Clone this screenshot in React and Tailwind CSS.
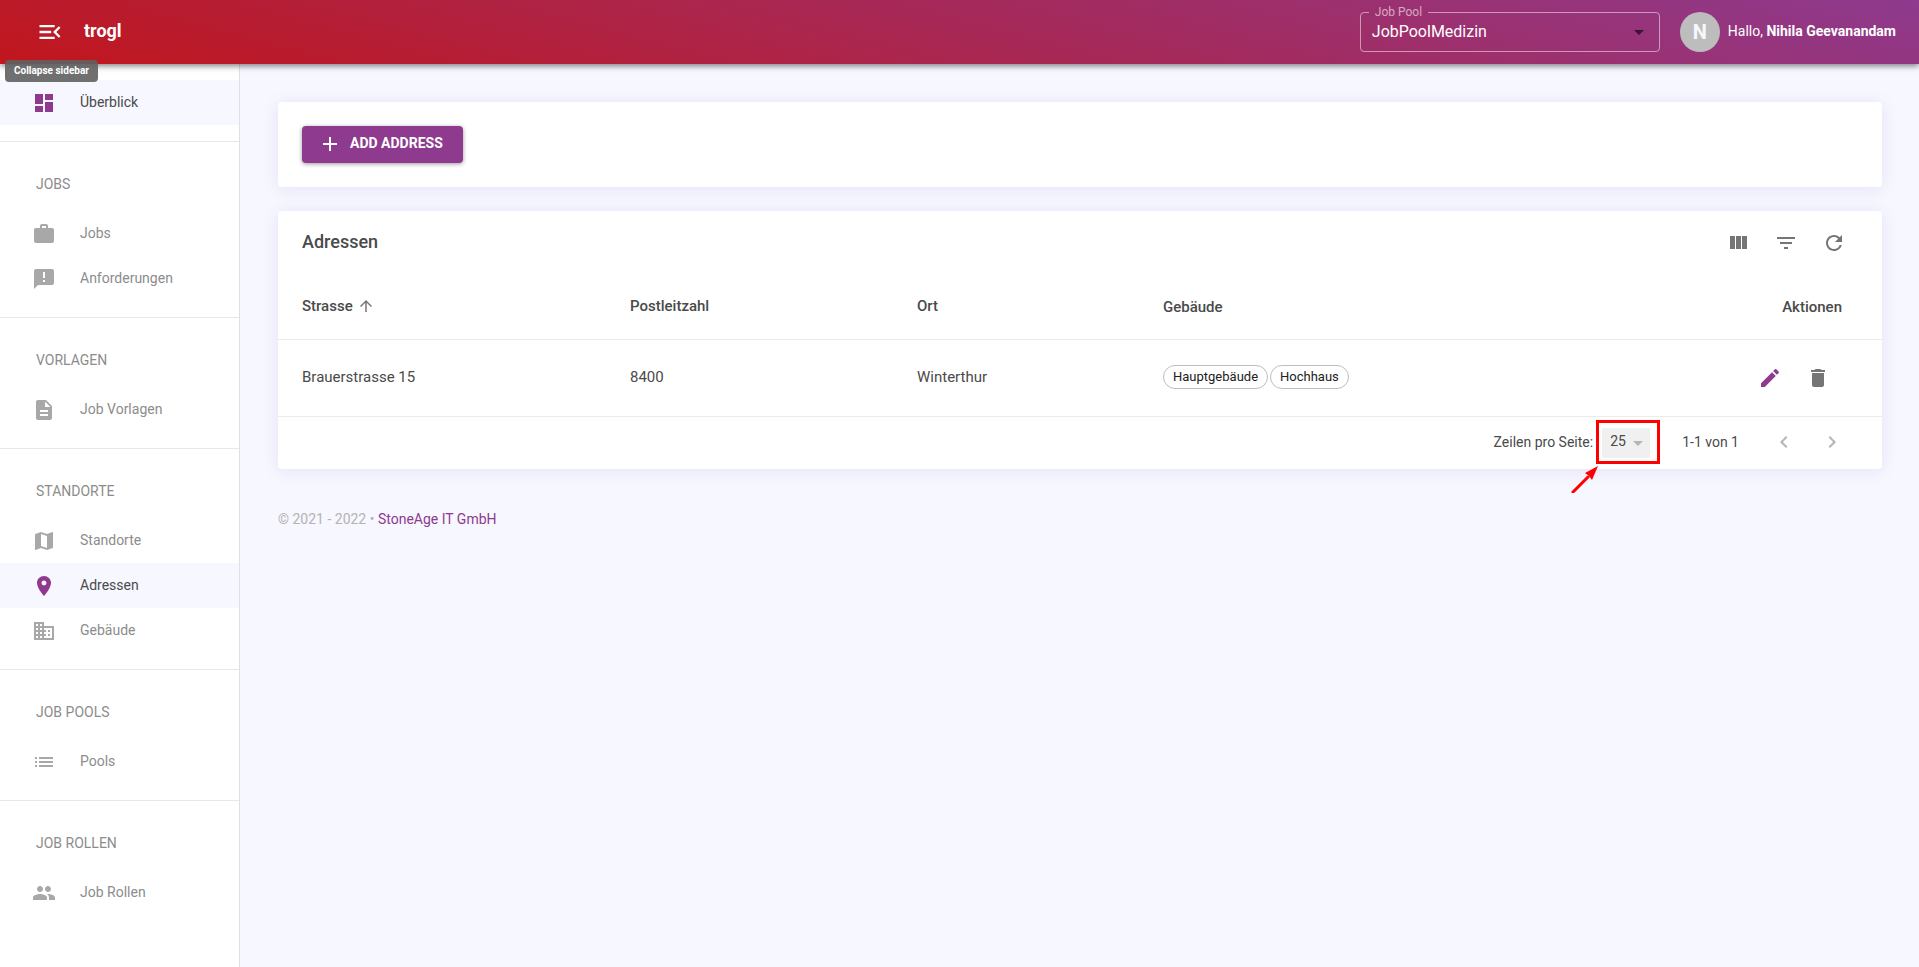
import {
  MdAdd,
  MdAnnouncement,
  MdArrowDropDown,
  MdArrowUpward,
  MdBusiness,
  MdChevronLeft,
  MdChevronRight,
  MdDashboard,
  MdDelete,
  MdDescription,
  MdEdit,
  MdFilterList,
  MdList,
  MdLocationOn,
  MdMap,
  MdMenuOpen,
  MdPeople,
  MdRefresh,
  MdWork,
} from "react-icons/md";

const sections = [
  { title: "Jobs", items: [{ label: "Jobs", icon: MdWork }, { label: "Anforderungen", icon: MdAnnouncement }] },
  { title: "Vorlagen", items: [{ label: "Job Vorlagen", icon: MdDescription }] },
  {
    title: "Standorte",
    items: [
      { label: "Standorte", icon: MdMap },
      { label: "Adressen", icon: MdLocationOn, active: true },
      { label: "Gebäude", icon: MdBusiness },
    ],
  },
  { title: "Job Pools", items: [{ label: "Pools", icon: MdList }] },
  { title: "Job Rollen", items: [{ label: "Job Rollen", icon: MdPeople }] },
];

const addresses = [
  { street: "Brauerstrasse 15", zip: "8400", city: "Winterthur", buildings: ["Hauptgebäude", "Hochhaus"] },
];

const cardClass = "rounded bg-white shadow-[0_2px_16px_rgba(80,80,200,0.12)]";

function ViewColumnIcon() {
  return (
    <svg viewBox="0 0 24 24" className="size-6" fill="currentColor" aria-hidden="true">
      <path d="M10 18h5V5h-5v13zm-6 0h5V5H4v13zM16 5v13h5V5h-5z" />
    </svg>
  );
}

function IconButton({ label, className = "text-[#757575]", children }) {
  return (
    <button type="button" aria-label={label} className={`grid size-12 place-items-center ${className}`}>
      {children}
    </button>
  );
}

function NavItem({ label, icon: Icon, active }) {
  return (
    <a
      href="#"
      className={`flex h-[45px] items-center gap-6 pl-8 text-sm ${
        active ? "bg-[#f7f7ff] text-[#4a4a4a]" : "text-[#8c8c8c]"
      }`}
    >
      <Icon className={`mt-px size-6 ${active ? "text-[#8e3a8e]" : "text-[#a8a8a8]"}`} />
      <span className="pb-0.5">{label}</span>
    </a>
  );
}

function Header() {
  return (
    <header className="relative z-10 flex h-16 items-center bg-[linear-gradient(15deg,#c1161c,#8e3a8e)] pr-[23px] pl-9 text-white shadow-[0_2px_6px_rgba(0,0,0,0.5)]">
      <div className="relative">
        <button type="button" aria-describedby="sidebar-tip" aria-label="Menu" className="block">
          <MdMenuOpen className="size-7" />
        </button>
        <div
          id="sidebar-tip"
          role="tooltip"
          className="absolute top-[42px] -left-[31px] rounded bg-[#616161]/90 px-[9px] py-1 text-[10px] leading-[14px] font-bold whitespace-nowrap"
        >
          Collapse sidebar
        </div>
      </div>
      <h1 className="ml-5 pb-0.5 text-lg leading-6 font-bold">trogl</h1>

      <div className="relative ml-auto h-10 w-[300px]">
        <fieldset className="pointer-events-none absolute inset-x-0 -top-1.5 bottom-0 rounded border border-white/50 pl-2">
          <legend className="h-3 px-[6px] text-xs leading-3 text-white/60">
            <label htmlFor="job-pool">Job Pool</label>
          </legend>
        </fieldset>
        <select id="job-pool" className="h-10 w-full appearance-none pr-8 pl-3 text-base">
          <option>JobPoolMedizin</option>
        </select>
        <MdArrowDropDown className="pointer-events-none absolute top-2 right-[9px] size-6 text-black/60" />
      </div>

      <div className="ml-5 grid size-10 place-items-center rounded-full bg-[#bdbdbd] text-xl font-bold text-[#f7f7ff]">
        N
      </div>
      <div className="ml-2 pb-0.5 text-sm">
        Hallo, <strong>Nihila Geevanandam</strong>
      </div>
    </header>
  );
}

function Sidebar() {
  return (
    <aside className="w-60 shrink-0 border-r border-[#e0e0e0] bg-white">
      <nav>
        <div className="border-b border-[#e8e8e8] py-4">
          <NavItem label="Überblick" icon={MdDashboard} active />
        </div>
        {sections.map((section) => (
          <div key={section.title} className="border-b border-[#e8e8e8] py-4 last:border-b-0">
            <h2 className="flex h-[53px] items-center pb-0.5 pl-9 text-sm text-[#8c8c8c] uppercase">
              {section.title}
            </h2>
            {section.items.map((item) => (
              <NavItem key={item.label} {...item} />
            ))}
          </div>
        ))}
      </nav>
    </aside>
  );
}

function AddressTable() {
  return (
    <table className="w-full table-fixed text-left text-[15px] text-[#4a4a4a]">
      <colgroup>
        <col className="w-[336px]" />
        <col className="w-[287px]" />
        <col className="w-[246px]" />
        <col />
        <col className="w-60" />
      </colgroup>
      <thead>
        <tr className="h-16 border-b border-[#ebebeb]">
          <th className="pb-0.5 pl-6 font-medium">
            <button type="button" className="flex items-center gap-1">
              Strasse
              <MdArrowUpward className="size-[18px] text-[#757575]" />
            </button>
          </th>
          <th className="pb-0.5 pl-4 font-medium">Postleitzahl</th>
          <th className="pb-0.5 pl-4 font-medium">Ort</th>
          <th className="pl-4 font-medium">Gebäude</th>
          <th className="pr-10 text-right font-medium">Aktionen</th>
        </tr>
      </thead>
      <tbody>
        {addresses.map((address) => (
          <tr key={address.street} className="h-[77px] border-b border-[#ebebeb]">
            <td className="pl-6">{address.street}</td>
            <td className="pl-4">{address.zip}</td>
            <td className="pl-4">{address.city}</td>
            <td className="pb-0.5 pl-4">
              <div className="flex gap-[2px]">
                {address.buildings.map((building) => (
                  <span
                    key={building}
                    className="flex h-6 items-center rounded-full border border-[#bdbdbd] px-[9px] text-[13px] text-[#212121]"
                  >
                    {building}
                  </span>
                ))}
              </div>
            </td>
            <td className="pr-10">
              <div className="flex justify-end">
                <IconButton label="Bearbeiten" className="text-[#8e3a8e]">
                  <MdEdit className="size-6" />
                </IconButton>
                <IconButton label="Löschen">
                  <MdDelete className="size-6" />
                </IconButton>
              </div>
            </td>
          </tr>
        ))}
      </tbody>
    </table>
  );
}

function Pagination() {
  return (
    <div className="flex h-[52px] items-center justify-end pr-[26px] pb-0.5 text-sm text-[#4a4a4a]">
      <label htmlFor="rows-per-page">Zeilen pro Seite:</label>
      <div className="relative ml-[3px] border-3 border-[#ff0000] pt-[5px] pr-[7px] pb-[3px] pl-[3px]">
        <select id="rows-per-page" className="block h-[30px] w-12 appearance-none bg-[#f0f0f0] pb-[3px] pl-2">
          <option>25</option>
        </select>
        <MdArrowDropDown className="pointer-events-none absolute top-2 right-[7px] size-6 text-[#b5b5b5]" />
        <svg
          viewBox="0 0 28 28"
          className="pointer-events-none absolute top-full right-full mt-1 size-7"
          fill="#ff0000"
          aria-hidden="true"
        >
          <path d="M2 27 17 12" stroke="#ff0000" strokeWidth="3" strokeLinecap="round" />
          <path d="M27 1 21 15 18 11 14 8Z" />
        </svg>
      </div>
      <span className="mr-[21px] ml-[22px]">1-1 von 1</span>
      <IconButton label="Vorherige Seite" className="text-[#b5b5b5]">
        <MdChevronLeft className="size-6" />
      </IconButton>
      <IconButton label="Nächste Seite" className="text-[#b5b5b5]">
        <MdChevronRight className="size-6" />
      </IconButton>
    </div>
  );
}

export default function App() {
  return (
    <div className="flex min-h-screen flex-col bg-[#f7f7ff] font-['Roboto',sans-serif]">
      <Header />
      <div className="flex flex-1">
        <Sidebar />
        <main className="min-w-0 flex-1 pt-[38px] pr-[37px] pl-[38px]">
          <section className={`${cardClass} p-6`}>
            <button
              type="button"
              className="flex h-[37px] items-center gap-2 rounded bg-[#8e3a8e] pr-5 pb-px pl-4 text-sm font-bold text-white uppercase shadow-[0_1px_4px_rgba(0,0,0,0.4)]"
            >
              <MdAdd className="size-6" />
              <span className="pb-0.5">Add Address</span>
            </button>
          </section>

          <section className={`${cardClass} mt-6`}>
            <div className="flex h-16 items-center justify-between px-6">
              <h2 className="pb-0.5 text-lg font-medium text-[#4a4a4a]">Adressen</h2>
              <div className="flex">
                <IconButton label="Spalten anzeigen">
                  <ViewColumnIcon />
                </IconButton>
                <IconButton label="Filter">
                  <MdFilterList className="size-6" />
                </IconButton>
                <IconButton label="Aktualisieren">
                  <MdRefresh className="size-6" />
                </IconButton>
              </div>
            </div>
            <AddressTable />
            <Pagination />
          </section>

          <footer className="mt-10 text-sm text-[#b3b3b3]">
            © 2021 - 2022 •{" "}
            <a href="#" className="text-[#8e3a8e]">
              StoneAge IT GmbH
            </a>
          </footer>
        </main>
      </div>
    </div>
  );
}
